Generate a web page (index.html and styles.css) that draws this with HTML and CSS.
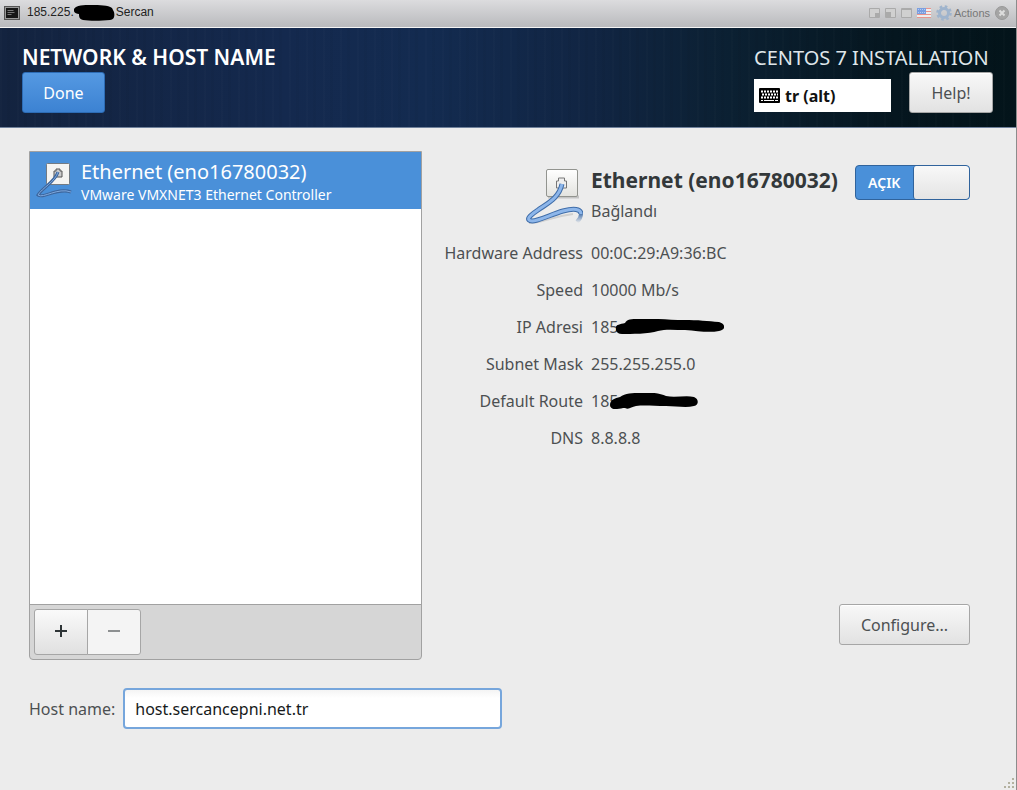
FILE: index.html
```html
<!DOCTYPE html>
<html lang="en">
<head>
<meta charset="utf-8">
<title>Network &amp; Host Name</title>
<link rel="stylesheet" href="styles.css">
</head>
<body>
<div class="window">
  <div class="titlebar">
    <svg class="console-icon" viewBox="0 0 16 14" width="16" height="14" aria-hidden="true">
      <rect x=".5" y=".5" width="15" height="13" fill="#999" stroke="#555"/>
      <rect x="2" y="2" width="12" height="10" fill="#161616"/>
      <path d="M3.500 4.500h6M3.500 6.500h7M3.500 8.500h4" stroke="#777"/>
    </svg>
    <span class="console-name">185.225.<svg class="mask" viewBox="0 0 42 16" width="42" height="16" aria-hidden="true"><path d="M0 4C2 0 10 0 17 0c9 0 17 0 21 3l2 4c1 4 0 8-4 8-9 1-21 1-27 0-4-1-4-4-4-6C2 9-1 7 0 4Z"/></svg>Sercan</span>
    <div class="tools">
      <button class="tool" aria-label="Corner right"><svg viewBox="0 0 11 10" width="11" height="10"><path d="M.5.5h10v9H.5z" fill="#d0d0d0" stroke="#aaa"/><path d="M6 5h4v4H6z" fill="#aaa"/></svg></button>
      <button class="tool" aria-label="Corner left"><svg viewBox="0 0 11 10" width="11" height="10"><path d="M.5.5h10v9H.5z" fill="#d0d0d0" stroke="#aaa"/><path d="M1 4h5v5H1z" fill="#aaa"/></svg></button>
      <button class="tool" aria-label="Full screen"><svg viewBox="0 0 11 10" width="11" height="10"><path d="M.5.5h10v9H.5z" fill="#d0d0d0" stroke="#aaa"/><path d="M1 1.500h9" stroke="#aaa"/></svg></button>
      <button class="tool" aria-label="Keyboard language"><svg viewBox="0 0 14 10" width="14" height="10"><path d="M0 0h14v10H0z" fill="#eee"/><path d="M0 .5h14M0 3.500h14M0 6.500h14M0 9.500h14" stroke="#e9948c"/><path d="M0 0h9v6H0z" fill="#7b9fe0"/><path d="M1 1.500h7M1 4.500h7" stroke="#b5cbf2" stroke-dasharray="1 1"/></svg></button>
      <button class="tool actions"><svg viewBox="0 0 16 16" width="16" height="16" aria-hidden="true"><circle cx="8" cy="8" r="4.500" fill="none" stroke="#9fb4cd" stroke-width="3"/><circle cx="8" cy="8" r="6.500" fill="none" stroke="#9fb4cd" stroke-width="2.600" stroke-dasharray="2.550"/></svg>Actions</button>
      <button class="tool" aria-label="Close"><svg viewBox="0 0 14 14" width="14" height="14"><circle cx="7" cy="7" r="6.500" fill="#a5a5a5" stroke="#999"/><path d="m4.500 4.500 5 5m0-5-5 5" stroke="#ddd" stroke-width="2"/></svg></button>
    </div>
  </div>

  <header class="banner">
    <div class="banner-left">
      <h1 class="page-title">NETWORK &amp; HOST NAME</h1>
      <button class="button done">Done</button>
    </div>
    <div class="banner-right">
      <p class="product">CENTOS 7 INSTALLATION</p>
      <div class="banner-row">
        <button class="layout">
          <svg viewBox="0 0 21 15" width="21" height="15" aria-hidden="true"><rect width="21" height="15" rx="1"/><path d="M2 3.500h17M3 6.500h16M2 9.500h17" stroke="#fff" stroke-width="2" stroke-dasharray="2 1"/><path d="M2 12.500h2m1 0h10m1 0h3" stroke="#fff"/></svg>
          tr (alt)
        </button>
        <button class="button help">Help!</button>
      </div>
    </div>
  </header>

  <main class="content">
    <section class="devices" aria-label="Devices">
      <div class="device-list">
        <div class="device">
          <svg viewBox="0 0 36 37" width="36" height="37" aria-hidden="true">
            <rect x="10.500" y="1.500" width="23" height="21" rx="1" fill="#f4f4f2" stroke="#737b83"/>
            <path d="M18 15V9h2V7h4v2h2v6z" fill="#ccc" stroke="#555"/>
            <path d="M22 10C19 20 6 26 2 33c5 4 20-8 33-3" fill="none" stroke="#3c659c" stroke-width="3"/>
            <path d="M22 10C19 20 6 26 2 33c5 4 20-8 33-3" fill="none" stroke="#7faae0"/>
          </svg>
          <div class="device-text">
            <span class="device-name">Ethernet (eno16780032)</span>
            <span class="device-type">VMware VMXNET3 Ethernet Controller</span>
          </div>
        </div>
      </div>
      <div class="toolbar">
        <button class="add" aria-label="Add"><svg viewBox="0 0 14 14" width="14" height="14"><path d="M7 1v12M1 7h12" stroke="#2e3436" stroke-width="2"/></svg></button>
        <button class="remove" aria-label="Remove" disabled><svg viewBox="0 0 14 14" width="14" height="14"><path d="M1 7h12" stroke="#8d9091" stroke-width="2"/></svg></button>
      </div>
    </section>

    <section class="details" aria-label="Device details">
      <div class="summary">
        <svg class="summary-icon" viewBox="0 0 58 56" width="58" height="56" aria-hidden="true">
          <defs>
            <linearGradient id="plate" x2="0" y2="1"><stop stop-color="#fff"/><stop offset="1" stop-color="#e3e3df"/></linearGradient>
            <linearGradient id="tail" gradientUnits="userSpaceOnUse" x1="0" y1="45" x2="0" y2="55"><stop stop-color="#3f6da9"/><stop offset="1" stop-color="#3f6da9" stop-opacity="0"/></linearGradient>
          </defs>
          <path d="M23 29h31" stroke="#c4c4c4" stroke-width="3"/>
          <rect x="21.500" y="1.500" width="31" height="27" rx="1.500" fill="url(#plate)" stroke="#92948f"/>
          <path d="M31.500 20v-7h2v-3h6v3h2v7z" fill="#eee" stroke="#777"/>
          <path d="M4 55c13 0 20-6 44-9" fill="none" stroke="#d0d0d0" stroke-width="2"/>
          <path d="M37 16c-3 14-14 19-24 26-6 4-11 8-9 10 4 4 20-5 34-9 11-3 18-2 18 3" fill="none" stroke="#3f6da9" stroke-width="5"/>
          <path d="M37 16c-3 14-14 19-24 26-6 4-11 8-9 10 4 4 20-5 34-9 11-3 18-2 18 3" fill="none" stroke="#8db6ea" stroke-width="3"/>
          <path d="M56 46c0 3-2 6-4 8" fill="none" stroke="url(#tail)" stroke-width="4"/>
        </svg>
        <div class="summary-text">
          <h2 class="summary-name">Ethernet (eno16780032)</h2>
          <p class="summary-state">Bağlandı</p>
        </div>
        <label class="switch"><input class="switch-input" type="checkbox" role="switch" checked><span class="switch-text">AÇIK</span><span class="knob"></span></label>
      </div>
      <dl class="facts">
        <dt>Hardware Address</dt><dd>00:0C:29:A9:36:BC</dd>
        <dt>Speed</dt><dd>10000 Mb/s</dd>
        <dt>IP Adresi</dt><dd>185<svg class="mask long" viewBox="0 0 108 15" width="108" height="15" aria-hidden="true"><path d="M0 8c0-2 4-3 9-4 2-4 6-4 14-4 14-1 30 1 45 1 14 0 24 1 35 2 7 2 7 8 0 9-10 2-21 0-34-1-10 0-20-1-27 1-9 3-27 3-36 3-5 0-7-4-6-7Z"/></svg></dd>
        <dt>Subnet Mask</dt><dd>255.255.255.0</dd>
        <dt>Default Route</dt><dd>185<svg class="mask short" viewBox="0 0 88 16" width="88" height="16" aria-hidden="true"><path d="M0 12c0-5 5-7 10-8 5-4 13-4 20-4 10-1 20 0 26 3 9 2 20-1 28 1 5 2 5 8 0 9-8 2-18 0-28 0-12 0-22-1-30 0-5 1-7 4-11 2-6 0-14 4-15-3Z"/></svg></dd>
        <dt>DNS</dt><dd>8.8.8.8</dd>
      </dl>
      <button class="button configure">Configure...</button>
    </section>
  </main>

  <footer class="hostname">
    <label for="host">Host name:</label>
    <input class="host-input" id="host" type="text" value="host.sercancepni.net.tr">
  </footer>
  <svg class="grip" viewBox="0 0 12 12" width="12" height="12" aria-hidden="true"><path d="M9 1h2M5 5h2m2 0h2M1 9h2m2 0h2m2 0h2" stroke="#b3b1a0" stroke-width="2"/></svg>
</div>
</body>
</html>
```
FILE: styles.css
```css
* { box-sizing: border-box; }
body {
  margin: 0;
  background: #ececec;
  color: #4c5052;
  font: 16px/24px "Noto Sans", "Open Sans", sans-serif;
}
h1, h2, p, dl, dd { margin: 0; }
svg { display: block; flex: none; }
button, input { font: inherit; color: inherit; }
.window {
  position: relative;
  display: flex;
  flex-direction: column;
  min-height: 100vh;
  border-right: 1px solid #8c8c8c;
}

.titlebar {
  display: flex;
  align-items: center;
  justify-content: space-between;
  height: 28px;
  padding: 0 7px 2px 4px;
  border-bottom: 1px solid #f4f4f4;
  background: linear-gradient(#dcdcde, #b9babd);
  font: 12px/16px "Liberation Sans", Arial, sans-serif;
  color: #222;
}
.console-icon { margin-right: 7px; }
.console-name { flex: 1; display: flex; }
.console-name .mask { margin-top: 1px; }
.tools { display: flex; align-items: center; gap: 5px; }
.tool {
  display: flex;
  align-items: center;
  gap: 2px;
  padding: 0;
  border: 0;
  background: none;
  color: #777;
}
.tool.actions { font-size: 11px; }

.banner {
  display: flex;
  justify-content: space-between;
  height: 100px;
  padding: 16px 23px 0 22px;
  background:
    repeating-linear-gradient(90deg, #ffffff03 0 2px, transparent 2px 7px, #00000008 7px 10px, transparent 10px 17px),
    linear-gradient(90deg, #13233f, #14294e 28%, #132b50 42%, #112543 58%, #0b2032 72%, #05161f 88%, #03141a);
  border-bottom: 1px solid #6f819b;
  color: #fff;
}
.banner-left { display: flex; flex-direction: column; align-items: flex-start; gap: 2px; }
.page-title { font-size: 21px; line-height: 26px; font-weight: 600; }
.banner-right { min-width: 239px; }
.product { font-size: 20px; line-height: 28px; color: #dfe6ea; }
.banner-row { display: flex; align-items: center; gap: 18px; }
.layout {
  display: flex;
  flex: 1;
  align-items: center;
  gap: 5px;
  height: 33px;
  margin-top: 6px;
  padding: 0 5px;
  border: 0;
  background: #fff;
  color: #111;
  font-weight: 700;
}
.button {
  height: 41px;
  border: 1px solid #a6a6a6;
  border-radius: 3px;
  background: linear-gradient(#f8f8f8, #e2e2e2);
  box-shadow: inset 0 1px #fff;
  color: #4c5052;
}
.done {
  width: 83px;
  border-color: #2d6cb5;
  background: linear-gradient(#5599e2, #3c82d2);
  box-shadow: none;
  color: #fff;
}
.help { width: 84px; }

.content {
  display: grid;
  grid-template-columns: 393fr 548fr;
  padding: 23px 46px 0 29px;
}
.devices {
  display: flex;
  flex-direction: column;
  border: 1px solid #a1a1a1;
  border-radius: 0 0 4px 4px;
  background: #d6d6d6;
  overflow: hidden;
}
.device-list { flex: 1; min-height: 452px; background: #fff; }
.device {
  display: flex;
  align-items: center;
  gap: 9px;
  height: 57px;
  padding: 0 6px;
  background: #4a90d9;
  color: #fff;
}
.device-text { display: flex; flex-direction: column; padding-top: 2px; white-space: nowrap; }
.device-name { font-size: 20px; line-height: 26px; }
.device-type { font-size: 14px; line-height: 20px; }
.toolbar { display: flex; padding: 4px; border-top: 1px solid #a1a1a1; }
.add, .remove {
  display: grid;
  place-items: center;
  width: 54px;
  height: 46px;
  padding: 0 0 3px;
  border: 1px solid #a6a6a6;
  border-radius: 3px 0 0 3px;
  background: linear-gradient(#fafafa, #e0e0e0);
}
.remove { margin-left: -1px; border-radius: 0 3px 3px 0; background: #f4f4f4; }

.details { display: flex; flex-direction: column; padding-bottom: 15px; }
.summary {
  display: grid;
  grid-template-columns: 161px 1fr auto;
  column-gap: 8px;
  align-items: start;
  padding-top: 14px;
}
.summary-icon { justify-self: end; margin-top: 3px; }
.summary-text { white-space: nowrap; }
.summary-name { font-size: 21px; line-height: 30px; font-weight: 700; color: #33383a; }
.summary-state { line-height: 32px; }
.switch {
  position: relative;
  display: grid;
  grid-template-columns: 1fr 1fr;
  width: 115px;
  height: 35px;
  border: 1px solid #30639c;
  border-radius: 4px;
  background: #4a90d9;
  overflow: hidden;
}
.switch-input { position: absolute; inset: 0; margin: 0; opacity: 0; }
.switch-text { font-size: 14px; line-height: 33px; font-weight: 600; text-align: center; color: #fff; }
.knob { border-left: 1px solid #30639c; border-radius: 3px; background: linear-gradient(#f8f8f8, #e4e4e4); }
.facts {
  display: grid;
  grid-template-columns: 161px 1fr;
  column-gap: 8px;
  margin-top: 8px;
  line-height: 37px;
  white-space: nowrap;
}
.facts dt { text-align: right; }
.facts dd { position: relative; }
.facts .mask { position: absolute; top: 10px; left: 25px; }
.facts .short { left: 19px; }
.configure { width: 131px; margin: auto 0 0 auto; }

.hostname {
  display: flex;
  align-items: center;
  gap: 8px;
  padding: 28px 29px 61px;
}
.host-input {
  width: 379px;
  height: 41px;
  padding: 0 10px;
  border: 2px solid #76a6dc;
  border-radius: 4px;
  background: linear-gradient(#f4f4f4, #fff 8px);
  color: #16191a;
}
.host-input:focus { outline: none; }
.grip { position: absolute; right: 1px; bottom: 0; }
```
